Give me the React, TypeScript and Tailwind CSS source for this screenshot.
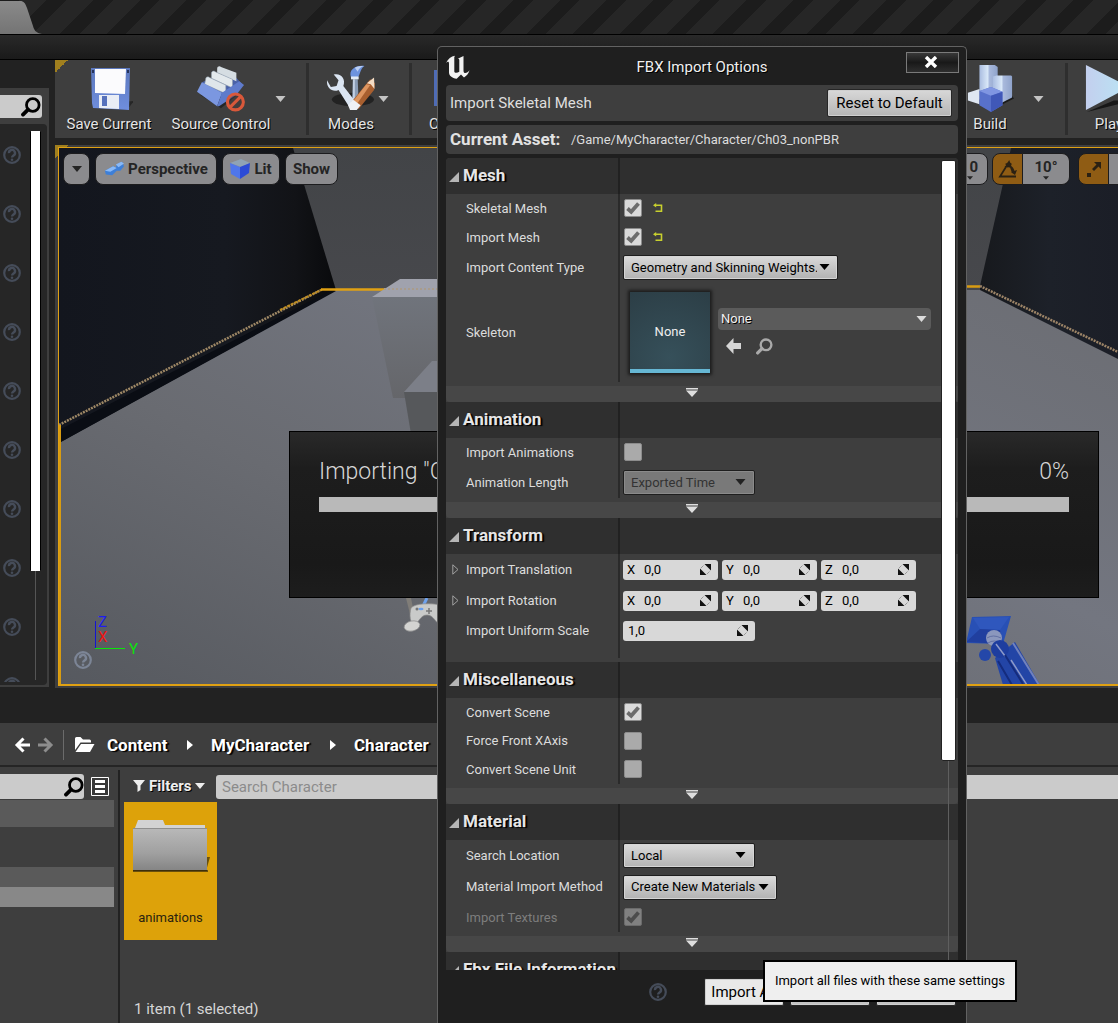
import type { ReactNode } from "react";

const shadow = "[text-shadow:1px_1px_0_#000]";
const heavyShadow = "[text-shadow:2px_1px_1px_#000]";

function HelpIcon({ light = false }: { light?: boolean }) {
  return (
    <svg viewBox="0 0 20 20" className={light ? "size-5 text-[#7c8596]" : "size-5 text-[#454c59]"} aria-hidden="true">
      <circle cx="10" cy="10" r="7.8" fill="none" stroke="currentColor" strokeWidth="2.2" />
      <path d="M7 8.200a3 3 0 1 1 4.600 2.200c-1 .7-1.500 1-1.500 2" fill="none" stroke="currentColor" strokeWidth="2.400" />
      <circle cx="10" cy="14.8" r="1.3" fill="currentColor" />
    </svg>
  );
}

function Triangle({ className }: { className: string }) {
  return (
    <svg viewBox="0 0 10 6" className={className} aria-hidden="true">
      <path d="M0 0h10L5 6z" fill="currentColor" />
    </svg>
  );
}

function SearchIcon({ className }: { className: string }) {
  return (
    <svg viewBox="0 0 20 20" className={className} fill="none" stroke="currentColor" aria-hidden="true">
      <circle cx="11.8" cy="8" r="6.3" strokeWidth="2.8" />
      <path d="M7 12.6 2 17.6" strokeWidth="3.8" strokeLinecap="round" />
    </svg>
  );
}

function SaveIcon() {
  return (
    <svg viewBox="0 0 48 48" className="size-12" aria-hidden="true">
      <defs>
        <linearGradient id="save" x1="0" y1="0" x2="0" y2="1">
          <stop offset="0" stopColor="#5c78bd" />
          <stop offset="1" stopColor="#6f8ede" />
        </linearGradient>
      </defs>
      <path d="M10 44 42 46 49 37 40 38z" fill="#1d1d1d" opacity=".7" />
      <path d="M6 4h39l-1 42-36-2-1-5z" fill="url(#save)" />
      <path d="M10 5h31l-1 25-30-1z" fill="#fbfbfd" />
      <path d="M14 31h20v14l-20-1z" fill="#e9edf5" />
      <path d="M17 32h5v10h-5z" fill="#5671bb" />
      <path d="M7 6h2v3H7zM42 6h2v3h-2z" fill="#27345c" />
    </svg>
  );
}

function SourceControlIcon() {
  return (
    <svg viewBox="0 0 52 50" className="h-12 w-[50px]" aria-hidden="true">
      <path d="M4 32 26 46 46 30 26 34z" fill="#1b1b1b" opacity=".7" />
      <path d="M6 19 36 8 49 22 24 35z" fill="#4a62a8" />
      <path d="M22 5c0-3 3-3 4-2l16 6v9L22 9z" fill="#d5dde2" />
      <path d="M16 10c0-3 3-3 4-2l18 8v9L16 15z" fill="#e3e9ec" stroke="#8d9bab" strokeWidth=".6" />
      <path d="M10 16c0-3 3-3 4-2l17 8v9L9 21z" fill="#dfe6ea" stroke="#8d9bab" strokeWidth=".6" />
      <path d="M6 19 27 30 22 44 1 29z" fill="#7b97e0" />
      <path d="M27 30 45 18 50 22 42 32 24 44 22 44z" fill="#5f7bcb" />
      <circle cx="41" cy="39.500" r="8.300" fill="#4a3a3a" fillOpacity=".5" stroke="#d9583a" strokeWidth="3.200" />
      <path d="m35 45.500 12-12" stroke="#d9583a" strokeWidth="3.200" />
    </svg>
  );
}

function ModesIcon() {
  return (
    <svg viewBox="0 0 52 50" className="h-12 w-[52px]" aria-hidden="true">
      <ellipse cx="28" cy="37" rx="22" ry="7" fill="#191919" opacity=".75" />
      <path d="M28 16h5l1 26h-7z" fill="#8a9cb5" />
      <path d="M28 16h2v24h-2z" fill="#c3d0e3" />
      <path d="M26 14c-3-8 5-13 14-12-5 3-4 10-8 13z" fill="#6d93de" />
      <path d="M30 4c3-2 6-2 9-2-3 1-5 3-6 6z" fill="#bcd0f3" />
      <path d="M26 13h8v3h-8z" fill="#e2eaf4" />
      <path d="M1 17c-1 9 7 13 12 10l12 19 7-5L18 23c3-8-3-14-10-12l5 6-2 6-6 1z" fill="#dbe5f2" />
      <path d="M46 16 51 20 50 27 34 47 26 40z" fill="#a85f2f" />
      <path d="m50 14 .5 12-4-5-4-1z" fill="#f3dcc4" />
      <path d="m42 21 4 1-14 20-4-3z" fill="#dd9560" />
      <path d="m28 37 8 6-4 5-7 0-2-5z" fill="#eef1f7" />
    </svg>
  );
}

function BuildIcon() {
  return (
    <svg viewBox="0 0 50 50" className="size-12" aria-hidden="true">
      <defs>
        <linearGradient id="tower" x1="0" x2="1">
          <stop offset="0" stopColor="#a9bce0" />
          <stop offset=".45" stopColor="#d8e7f8" />
          <stop offset=".55" stopColor="#a8b9dc" />
          <stop offset="1" stopColor="#8fa3cb" />
        </linearGradient>
      </defs>
      <path d="M30 46 50 36 48 33z" fill="#1b1b1b" />
      <path d="M14 1h16l3 2v34H14z" fill="url(#tower)" />
      <path d="M28 13l4-1h15l1 1v22L32 43l-4-5z" fill="url(#tower)" />
      <path d="M2 30l12-4v16L2 38z" fill="#dfe7f2" />
      <path d="M14 28 26 24 38 29v14L26 50 14 43z" fill="#5871cb" />
      <path d="M14 28 26 24 38 29 26 33z" fill="#8096e2" />
      <path d="M26 33 38 29v14l-12 7z" fill="#4058b8" />
    </svg>
  );
}

function PlayIcon() {
  return (
    <svg viewBox="0 0 50 50" className="size-12" aria-hidden="true">
      <defs>
        <linearGradient id="play" x1="0" y1="0" x2="1" y2="0">
          <stop offset="0" stopColor="#c3cfee" />
          <stop offset="1" stopColor="#b9e5f4" />
        </linearGradient>
      </defs>
      <path d="M2 50 50 38 30 38z" fill="#171717" />
      <path d="M1 1 46 24 1 48z" fill="url(#play)" />
    </svg>
  );
}

function ToolButton({ icon, label, className = "" }: { icon: ReactNode; label: string; className?: string }) {
  return (
    <button className={`flex shrink-0 flex-col items-center gap-[2px] pt-1 ${className}`}>
      {icon}
      <span className={`text-[15px] leading-5 whitespace-nowrap text-[#e4e4e4] ${shadow}`}>{label}</span>
    </button>
  );
}

function Separator() {
  return <div className="my-[3px] w-[3px] shrink-0 bg-[#2e2e2e]" />;
}

function Toolbar() {
  return (
    <div className="relative flex h-[78px] overflow-hidden bg-[#3e3e3e]">
      <Corner />
      <ToolButton icon={<SaveIcon />} label="Save Current" className="ml-2 w-[92px]" />
      <ToolButton icon={<SourceControlIcon />} label="Source Control" className="ml-3 w-[108px]" />
      <button aria-label="Source control options" className="w-6 shrink-0">
        <Triangle className="h-[6px] w-[11px] text-[#c4c4c4]" />
      </button>
      <div className="w-[7px] shrink-0" />
      <Separator />
      <ToolButton icon={<ModesIcon />} label="Modes" className="ml-[15px] w-[54px]" />
      <button aria-label="Modes options" className="w-4 shrink-0">
        <Triangle className="h-[6px] w-[11px] text-[#c4c4c4]" />
      </button>
      <div className="w-[15px] shrink-0" />
      <Separator />
      <div className="flex h-full flex-1 flex-col pl-[17px]">
        <div className="mt-[10px] ml-[5px] h-9 w-10 bg-[#4f6cb5]" />
        <span className={`mt-2 text-[15px] leading-5 text-[#e4e4e4] ${shadow}`}>Content</span>
      </div>
      <ToolButton icon={<BuildIcon />} label="Build" className="w-[54px]" />
      <button aria-label="Build options" className="ml-[14px] w-[34px] shrink-0">
        <Triangle className="ml-[2px] h-[6px] w-[11px] text-[#c4c4c4]" />
      </button>
      <Separator />
      <div className="flex w-[50px] shrink-0 overflow-hidden">
        <ToolButton icon={<PlayIcon />} label="Play" className="ml-[11px] w-[60px]" />
      </div>
    </div>
  );
}

function Corner() {
  return <div className="absolute top-0 left-0 size-[13px] bg-[linear-gradient(135deg,#a07f1e_50%,transparent_50%)]" />;
}

function DetailsStrip() {
  return (
    <div className="mt-7 flex min-h-0 flex-col bg-[#3e3e3e] pt-[7px] pr-[2px]">
      <label className="mr-[5px] flex h-[23px] items-center rounded-r-[3px] bg-[#cbcbcb]">
        <input aria-label="Search Classes" className="h-full w-0 flex-1 bg-transparent outline-none" />
        <SearchIcon className="mr-px size-5 text-black" />
      </label>
      <div className="mt-[6px] mb-[2px] flex h-[561px] rounded-r-[4px] bg-[#262626] pt-[7px]">
        <div className="flex h-[551px] w-[30px] flex-col gap-[39px] overflow-hidden pt-[14px] pl-[2px]">
          {Array.from({ length: 10 }, (_, i) => (
            <button key={i} aria-label="Help" className="size-5 shrink-0">
              <HelpIcon />
            </button>
          ))}
        </div>
        <div className="flex h-[549px] w-[11px] flex-col items-center">
          <div className="h-[440px] w-full rounded-[1px] border-x border-black bg-white" />
          <div className="w-px flex-1 bg-[#555]" />
        </div>
      </div>
    </div>
  );
}

function Scene() {
  return (
    <svg viewBox="59 148 1059 536" preserveAspectRatio="xMinYMin slice" className="absolute inset-0 size-full" aria-hidden="true">
      <defs>
        <linearGradient id="floor" x1="0" y1="1" x2="1" y2="0">
          <stop offset="0" stopColor="#56595f" />
          <stop offset=".3" stopColor="#696b71" />
          <stop offset=".55" stopColor="#737680" />
          <stop offset="1" stopColor="#68696d" />
        </linearGradient>
        <linearGradient id="back" x1="0" y1="0" x2="0" y2="1">
          <stop offset="0" stopColor="#424447" />
          <stop offset="1" stopColor="#47484c" />
        </linearGradient>
        <linearGradient id="wallL" x1="0" x2="1">
          <stop offset="0" stopColor="#13161e" />
          <stop offset=".6" stopColor="#161920" />
          <stop offset=".85" stopColor="#121317" />
          <stop offset="1" stopColor="#090a0c" />
        </linearGradient>
        <linearGradient id="wallR" x1="0" x2="1">
          <stop offset="0" stopColor="#17191d" />
          <stop offset=".5" stopColor="#1d2129" />
          <stop offset="1" stopColor="#1b1e27" />
        </linearGradient>
        <linearGradient id="boxFront" x1="0" y1="0" x2="0" y2="1">
          <stop offset="0" stopColor="#70747c" />
          <stop offset="1" stopColor="#65666a" />
        </linearGradient>
      </defs>
      <path d="M59 148h1059v536H59z" fill="url(#floor)" />
      <path d="M290 148h730v142H290z" fill="url(#back)" />
      <path d="M59 148h234l43 142L59 443z" fill="url(#wallL)" />
      <path d="M59 430 330 291l6 0L59 443z" fill="#0a0d14" />
      <path d="M1011 148h107v211L980 290V286z" fill="url(#wallR)" />
      <path d="M59 425 321 290" stroke="#9d8765" strokeWidth="2.500" strokeDasharray="2 1" />
      <path d="M280 310 322 289.500" stroke="#c08d1e" strokeWidth="2" strokeDasharray="3 1" />
      <path d="M321 289.500H384" stroke="#e0a113" strokeWidth="2.500" />
      <path d="M967 286.500H980" stroke="#d99c12" strokeWidth="2.500" />
      <path d="m980 286 138 66" stroke="#9c8467" strokeWidth="2.500" strokeDasharray="2 1" />
      <path d="M400 279h120v18H372z" fill="#a0a2ad" />
      <path d="M384 289h60" stroke="#a99c8c" strokeWidth="2" strokeDasharray="2 2" />
      <path d="M372 297h148v101H393z" fill="url(#boxFront)" />
      <path d="M432 361h90v31H404z" fill="#7c7f88" />
      <path d="M404 392h120v60H414z" fill="#56585b" />
      <path d="M60 425v260" stroke="#d89c10" strokeWidth="2" />
      <g>
        <path d="M406 598h5l4 20-3 4z" fill="#807d78" />
        <path d="m427 598-4 8" stroke="#6fa3ef" strokeWidth="3" />
        <path d="M411 608c4-5 20-5 30-3v20c-6-2-7-10-14-10s-8 8-13 10c-4-2-5-10-3-17z" fill="#c9cac9" stroke="#888" strokeWidth=".7" />
        <ellipse cx="421" cy="609" rx="2.500" ry="1.200" fill="#6aa0f0" />
        <circle cx="417" cy="609" r="1.500" fill="#777" />
        <path d="M429 608v6M426 611h6" stroke="#777" strokeWidth="1.500" />
        <ellipse cx="412" cy="626" rx="8" ry="5" fill="#d3d3d1" stroke="#8b8b8b" strokeWidth=".7" transform="rotate(-12 412 626)" />
      </g>
      <g>
        <path d="m995 658 20-16 25 43h-37z" fill="#2345a6" />
        <path d="m972 617 39-1-8 28-37-1z" fill="#2850b5" />
        <path d="m973 618 7 11 20 1 9-13z" fill="#2f57bd" />
        <path d="m966 642 14-13 20 1 3 14z" fill="#203f9f" />
        <circle cx="994" cy="638" r="8" fill="#8b97bd" />
        <path d="M987 638q6-4 14 0M988 643q6-4 13 0" stroke="#6270a3" fill="none" />
        <circle cx="1000" cy="649" r="9" fill="#1e3d9f" />
        <circle cx="985" cy="655" r="6" fill="#2447a9" />
        <path d="m1013 643 26 42" stroke="#7182bd" strokeWidth="2" />
        <path d="m1011 660 16 25M996 644l9 12" stroke="#8c99c9" strokeWidth="1.500" />
        <path d="m998 661 14 24M1005 655l18 29" stroke="#152c7d" strokeWidth="2" />
      </g>
    </svg>
  );
}

const chip = "flex h-8 shrink-0 items-center justify-center border border-[#1c1c1e] bg-[#8b8b8e] text-[15px] font-bold text-[#242424]";

function Viewport() {
  return (
    <div className="relative mt-[7px] flex flex-1 flex-col bg-[#3e3e3e] pt-[2px] pb-[2px] pl-[3px]">
      <Corner />
      <div className="relative flex flex-1 flex-col overflow-hidden border-t border-b-2 border-l border-[#e0a113]">
        <Scene />
        <div className="relative flex pt-[5px] pl-1">
          <button aria-label="Viewport options" className={`${chip} w-[27px] rounded-[8px]`}>
            <Triangle className="h-[6px] w-[10px]" />
          </button>
          <button className={`${chip} ml-[5px] w-[122px] gap-1 rounded-[8px]`}>
            <svg viewBox="0 0 22 18" className="h-[18px] w-[20px]" aria-hidden="true">
              <path d="m1 11 9-5 3 1 1-3 6-3 2 5-4 5-4 0-5 5-7-1z" fill="#3d7fd8" />
              <path d="m1 11 9-5 4 2-7 4zM13 4l6-3 3 2-6 4z" fill="#8ab9f6" />
            </svg>
            Perspective
          </button>
          <button className={`${chip} ml-[5px] w-[58px] gap-1 rounded-[8px]`}>
            <svg viewBox="0 0 20 20" className="size-5" aria-hidden="true">
              <path d="M0 4 11 0l9 4-9 4z" fill="#8fa3b5" />
              <path d="m0 4 10 4v12L1 15z" fill="#4f76ea" />
              <path d="m20 4-10 4v12l9-6z" fill="#2c4bd6" />
            </svg>
            Lit
          </button>
          <button className={`${chip} ml-[5px] w-[53px] rounded-[8px]`}>Show</button>
          <div className="flex-1" />
          <button aria-label="Grid snap value" className={`${chip} w-10 flex-col rounded-[8px]`}>
            <span className="w-full pr-[9px] text-right leading-[18px]">0</span>
            <Triangle className="mr-[14px] h-1 w-[6px] self-end" />
          </button>
          <button aria-label="Rotation snap" className={`${chip} ml-1 w-[31px] rounded-l-[8px] bg-[#8f5c14]`}>
            <svg viewBox="0 0 20 20" className="size-5" fill="none" stroke="#2b2113" strokeWidth="1.800" aria-hidden="true">
              <path d="M18 17.500H2L11 3l4 11M7 8c5-2 8 0 9 6" />
              <path d="m13 13 6-2-2 5zM7 5l4-2 3 2-3 3z" fill="#2b2113" stroke="none" />
            </svg>
          </button>
          <button className={`${chip} w-[47px] flex-col rounded-r-[8px] border-l-0`}>
            <span className="leading-[18px]">10°</span>
            <Triangle className="h-1 w-[6px]" />
          </button>
          <button aria-label="Scale snap" className={`${chip} ml-2 w-[31px] rounded-l-[8px] bg-[#8f5c14]`}>
            <svg viewBox="0 0 16 16" className="size-4" fill="#2b2113" aria-hidden="true">
              <path d="M1 12h4v4H1zM8 1h7v7l-2.500-2.500-4.500 4.500-2-2 4.500-4.500z" />
            </svg>
          </button>
          <div className={`${chip} w-[9px] border-x-0`} />
        </div>
        <svg viewBox="0 0 60 50" className="absolute bottom-[24px] left-[33px] h-[50px] w-[60px]" aria-hidden="true">
          <path d="M3.500 11v27" stroke="#1414d2" />
          <path d="M3 38.500h30" stroke="#0ae50a" />
          <g fontFamily="Roboto, sans-serif" fontSize="15">
            <text x="6" y="17" fill="#1d1df0">Z</text>
            <text x="6" y="32" fill="#f01414">X</text>
            <text x="37" y="44" fill="#0ae50a">Y</text>
          </g>
        </svg>
        <button aria-label="Viewport help" className="absolute bottom-[14px] left-[14px] size-5">
          <HelpIcon light />
        </button>
      </div>
    </div>
  );
}

function CrumbArrow() {
  return (
    <svg viewBox="0 0 6 10" className="mx-[18px] h-[10px] w-[6px]" fill="#fff" aria-hidden="true">
      <path d="m0 0 6 5-6 5z" />
    </svg>
  );
}

function ContentBrowser() {
  const crumb = `min-w-[62px] text-[17px] leading-6 font-bold text-white ${heavyShadow}`;
  return (
    <div className="mt-[35px] flex flex-1 flex-col bg-[#3e3e3e]">
      <nav className="flex h-[42px] items-center pt-px pl-[14px]">
        <button aria-label="Back" className="size-[18px]">
          <svg viewBox="0 0 18 18" fill="none" stroke="#fff" strokeWidth="3" aria-hidden="true">
            <path d="M16 9H3M9.500 2.500 3 9l6.500 6.500" />
          </svg>
        </button>
        <button aria-label="Forward" className="ml-[5px] size-[18px]">
          <svg viewBox="0 0 18 18" fill="none" stroke="#8d8d8d" strokeWidth="3" aria-hidden="true">
            <path d="M1 9h13M7.500 2.500 14 9l-6.500 6.500" />
          </svg>
        </button>
        <div className="ml-2 h-[30px] w-px bg-[#6b6b6b]" />
        <svg viewBox="0 0 22 16" className="ml-[10px] h-4 w-[22px]" fill="#fff" aria-hidden="true">
          <path d="M1 13V1.500Q1 0 2.500 0H6.500L9 2.500h6.500Q17 2.500 17 4v1.500H6.500L1.800 12z" />
          <path d="M7 7h13.500L16 15H1.500z" />
        </svg>
        <a href="#content" className={`ml-[11px] ${crumb}`}>Content</a>
        <CrumbArrow />
        <a href="#mycharacter" className={`w-[101px] ${crumb}`}>MyCharacter</a>
        <CrumbArrow />
        <a href="#character" className={crumb}>Character</a>
      </nav>
      <div className="h-[2px] bg-[#252525]" />
      <div className="flex flex-1">
        <div className="w-[118px] pt-[7px]">
          <div className="flex items-center gap-[7px]">
            <label className="flex h-[25px] w-[84px] items-center rounded-r-[3px] bg-[#cbcbcb]">
              <input aria-label="Search Folders" className="h-full w-0 flex-1 bg-transparent outline-none" />
              <SearchIcon className="size-5 text-black" />
            </label>
            <button aria-label="Toggle sources view">
              <svg viewBox="0 0 18 19" className="h-[19px] w-[18px]" aria-hidden="true">
                <path d="M.5.500h17v18H.5z" fill="#3a3a3a" stroke="#fff" />
                <path d="M4 3h10v3H4zM4 8h10v3H4zM4 13h10v3H4z" fill="#fff" />
              </svg>
            </button>
          </div>
          <div className="mt-px mr-1 h-[27px] bg-[#5a5a5a]" />
          <div className="mt-10 mr-1 h-5 bg-[#5a5a5a]" />
          <div className="mr-1 h-5 bg-[#888]" />
        </div>
        <div className="mt-[3px] w-[2px] bg-[#222]" />
        <div className="flex flex-1 flex-col pt-2 pl-1">
          <div className="flex h-6 items-center">
            <button className={`mb-[2px] flex w-[92px] items-center pl-[9px] text-[15px] font-bold text-[#eee] ${shadow}`}>
              <svg viewBox="0 0 12 12" className="mr-1 size-3" fill="currentColor" aria-hidden="true">
                <path d="M0 0h12L7.500 5.500V10L4.500 12V5.500z" />
              </svg>
              Filters
              <Triangle className="ml-[3px] h-[6px] w-[10px]" />
            </button>
            <input
              aria-label="Search Character"
              placeholder="Search Character"
              className="h-6 flex-1 rounded-l-[3px] bg-[#cbcbcb] px-[6px] text-[15px] outline-none placeholder:text-[#8b8b8b]"
            />
          </div>
          <button className="mt-[3px] flex h-[138px] w-[93px] flex-col items-center bg-[#dda20a] pt-[17px]">
            <svg viewBox="0 0 78 54" className="h-[54px] w-[78px]" aria-hidden="true">
              <defs>
                <linearGradient id="folder" x1="0" y1="0" x2="0" y2="1">
                  <stop offset="0" stopColor="#b9b9b9" />
                  <stop offset=".6" stopColor="#a0a0a0" />
                  <stop offset="1" stopColor="#858585" />
                </linearGradient>
              </defs>
              <path d="m74 52 4-14h-4zM1 51h75v2H1z" fill="#6a500c" />
              <path d="m3 9 3-8h25l2 5h40v4H3z" fill="#d3d3d3" />
              <path d="M1 9h74v42H1z" fill="url(#folder)" />
              <path d="M1 9.500h74" stroke="#8f8f8f" />
              <path d="M1 51.500h74" stroke="#3e2f0b" />
            </svg>
            <span className="mt-[35px] text-[13px] leading-5 text-[#2a230f]">animations</span>
          </button>
          <div className="flex-1" />
          <p className="mb-1 pl-[10px] text-[15px] leading-5 text-[#d5d5d5]">1 item (1 selected)</p>
        </div>
      </div>
    </div>
  );
}

function ImportProgress() {
  return (
    <div className="absolute top-[431px] left-[289px] h-[167px] w-[810px] border border-black bg-[linear-gradient(#292929,#1d1d1d_22%,#191919_80%,#1d1d1d)] px-[29px] pt-6">
      <div className="flex justify-between text-[23px] leading-8 font-light text-[#d6d6d6]">
        <span>Importing "C</span>
        <span>0%</span>
      </div>
      <div role="progressbar" aria-label="Import progress" aria-valuenow={0} className="mt-[9px] h-[15px] bg-[#b9b9b9]" />
    </div>
  );
}

function Section({ title, expander = true, children }: { title: string; expander?: boolean; children?: ReactNode }) {
  return (
    <section className="shrink-0">
      <button className="flex h-9 w-full bg-[#2f2f2f] text-left">
        <span className="flex h-full w-[174px] shrink-0 items-center border-r-2 border-[#212121] pb-[2px] pl-[3px]">
          <svg viewBox="0 0 10 10" className="mt-1 mr-1 size-[10px] shrink-0" fill="#b5b5b5" aria-hidden="true">
            <path d="M10 0v10H0z" />
          </svg>
          <span className={`text-[17px] leading-6 font-bold whitespace-nowrap text-[#e6e6e6] ${heavyShadow}`}>{title}</span>
        </span>
      </button>
      <div className="pb-1">{children}</div>
      {expander && (
        <button aria-label={`Show advanced ${title} options`} className="flex h-4 w-full justify-center rounded-b-[4px] bg-[#474747] pt-[2px] pr-5">
          <svg viewBox="0 0 12 9" className="h-[9px] w-3" fill="#dedede" aria-hidden="true">
            <path d="M0 0h12v1.500H0zM0 2.500h12L6 9z" />
          </svg>
        </button>
      )}
    </section>
  );
}

function Row({ label, height, arrow = false, dim = false, children }: { label: string; height: string; arrow?: boolean; dim?: boolean; children?: ReactNode }) {
  return (
    <div className={`flex ${height}`}>
      <div className={`flex w-[174px] shrink-0 items-center border-r-2 border-[#2a2a2a] text-[13px] leading-4 ${dim ? "text-[#7d7d7d]" : "text-[#dcdcdc]"}`}>
        <span className="flex w-5 pl-[6px]">
          {arrow && (
            <svg viewBox="0 0 7 11" className="h-[11px] w-[7px]" fill="none" stroke="#a0a0a0" aria-hidden="true">
              <path d="M.8.800v9.400L6 5.500z" />
            </svg>
          )}
        </span>
        {label}
      </div>
      <div className="flex flex-1 items-center pl-[3px]">{children}</div>
    </div>
  );
}

function Check({ label, checked = false, disabled = false }: { label: string; checked?: boolean; disabled?: boolean }) {
  return (
    <span className="relative mb-px ml-px flex size-[18px]">
      <input
        type="checkbox"
        aria-label={label}
        defaultChecked={checked}
        disabled={disabled}
        className="peer size-[18px] appearance-none rounded-[2px] border border-[#8c8c8c] bg-[#aaaaaa] checked:bg-[#dadada] disabled:border-[#6b6b6b] disabled:bg-[#808080]"
      />
      <svg viewBox="0 0 18 18" className="pointer-events-none absolute inset-0 hidden size-[18px] text-[#6c6c6c] peer-checked:block peer-disabled:text-[#4c4c4c]" fill="none" stroke="currentColor" strokeWidth="3.800" aria-hidden="true">
        <path d="m3.500 9.500 3.700 3.300L14.500 4.500" />
      </svg>
    </span>
  );
}

function ResetArrow({ label }: { label: string }) {
  return (
    <button aria-label={`Reset ${label}`} className="mb-[2px] ml-[11px]">
      <svg viewBox="0 0 10 10" className="size-[10px]" fill="none" stroke="#c8d02e" strokeWidth="1.600" aria-hidden="true">
        <path d="M2 2.300h6.500v6H2.500" />
        <path d="M0 2.300 3.200 0v4.600z" fill="#c8d02e" stroke="none" />
      </svg>
    </button>
  );
}

function Dropdown({ label, value, width, disabled = false }: { label: string; value: string; width: string; disabled?: boolean }) {
  return (
    <span className={`relative flex ${width}`}>
      <select
        aria-label={label}
        disabled={disabled}
        className="h-[25px] w-full appearance-none rounded-[2px] border border-[#1e1e1e] bg-[linear-gradient(#dadada,#c6c6c6_50%,#b2b2b2)] pr-5 pl-[7px] text-[13px] text-black shadow-[inset_0_0_0_1px_#d5d5d5] disabled:bg-none disabled:bg-[#797979] disabled:text-[#333] disabled:opacity-100 disabled:shadow-[inset_0_0_0_1px_#8a8a8a]"
      >
        <option>{value}</option>
      </select>
      <Triangle className={`pointer-events-none absolute top-[9px] h-[6px] w-[11px] ${disabled ? "text-[#222]" : "text-black"} ${width === "w-[132px]" ? "right-[9px]" : "right-2"}`} />
    </span>
  );
}

function NumberBox({ axis, label, value, width }: { axis?: string; label: string; value: string; width: string }) {
  return (
    <label className={`flex h-5 items-center rounded-[3px] bg-[#d8d8d8] text-[13px] text-black ${width}`}>
      {axis && <span className="w-[16px] pl-1">{axis}</span>}
      <input aria-label={label} defaultValue={value} className="h-full w-0 flex-1 bg-transparent pl-[5px] outline-none" />
      <svg viewBox="0 0 11 11" className="mr-[7px] size-[11px]" aria-hidden="true">
        <path d="M4.500 0H11v6.500zM0 4.500V11h6.500z" fill="#111" />
        <path d="M3.500 1.500 1 4M9.500 7.500 7 10" stroke="#999" />
      </svg>
    </label>
  );
}

function VectorInput({ label }: { label: string }) {
  return (
    <div className="flex gap-1">
      {["X", "Y", "Z"].map((axis) => (
        <NumberBox key={axis} axis={axis} label={`${label} ${axis}`} value="0,0" width="w-[95px]" />
      ))}
    </div>
  );
}

function SkeletonPicker() {
  return (
    <div className="flex items-center">
      <button className="ml-[7px] flex h-[81px] w-[80px] items-center justify-center border-b-4 border-[#66b7d4] bg-[radial-gradient(circle_at_50%_85%,#36505a,#2c3e46)] pt-[2px] text-[13px] text-[#eee] shadow-[0_0_3px_2px_#1c1c1c]">
        None
      </button>
      <div className="mb-[3px] ml-2 flex flex-col">
        <span className="relative flex w-[213px]">
          <select aria-label="Skeleton" className={`h-[22px] w-full appearance-none rounded-[4px] bg-[#5b5b5b] pl-[3px] text-[13px] text-[#f0f0f0] ${shadow}`}>
            <option>None</option>
          </select>
          <Triangle className="pointer-events-none absolute top-2 right-1 h-[6px] w-[11px] text-[#dcdcdc]" />
        </span>
        <div className="mt-2 flex gap-[14px] pl-2">
          <button aria-label="Use selected asset">
            <svg viewBox="0 0 16 16" className="size-4" fill="#d6d6d6" aria-hidden="true">
              <path d="M0 8 7.500 0v5H15v6H7.500v5z" />
            </svg>
          </button>
          <button aria-label="Browse to asset">
            <SearchIcon className="size-[17px] text-[#a9a9a9]" />
          </button>
        </div>
      </div>
    </div>
  );
}

const plainButton = "h-7 shrink-0 rounded-[2px] border border-[#262626] text-[15px] text-black shadow-[inset_0_0_0_1px_#cfcfcf]";

function ImportDialog() {
  return (
    <div role="dialog" aria-label="FBX Import Options" className="absolute top-[46px] bottom-0 left-[437px] flex w-[530px] flex-col rounded-t-[5px] border-x border-t border-[#626262] bg-[#1f1f1f] px-2">
      <header className="relative flex h-[38px] items-center justify-center">
        <svg viewBox="0 0 24 24" className="absolute top-2 left-0 size-6" fill="#f2f2f2" aria-hidden="true">
          <path d="M0 8C2 4 5 1.500 9 .8L8.300 2v14.500c0 1.600 3 1.800 5 .2V5.500c0-1.400-.6-1.700-1.600-1.700L17.500 1v14.500c0 2 .8 2.600 1.800 2.600 1.500 0 2.800-1 4.200-2.800-.8 3-2.800 5.600-5.500 7.200L15 19.500l-4.300 4.200C6 23.300 3 20.500 3 17.500V8.800C3 6 1.800 6.300 0 8z" />
        </svg>
        <h1 className={`mt-px text-[15px] leading-5 text-[#f0f0f0] ${shadow}`}>FBX Import Options</h1>
        <button aria-label="Close" className="absolute top-[5px] -right-px flex h-[21px] w-[53px] items-center justify-center border border-[#7a7a7a] bg-[linear-gradient(#383838,#191919_50%,#2e2e2e)] pr-1 pb-px">
          <svg viewBox="0 0 14 12" className="h-3 w-[14px]" stroke="#fff" strokeWidth="3.400" aria-hidden="true">
            <path d="m2 1 10 10M12 1 2 11" />
          </svg>
        </button>
      </header>
      <div className="flex h-9 shrink-0 items-center justify-between rounded-[4px] bg-[#3e3e3e] pr-[6px] pl-1">
        <h2 className="text-[15px] text-[#dedede]">Import Skeletal Mesh</h2>
        <button className={`${plainButton} w-[125px] bg-[linear-gradient(#d8d8d8,#b5b5b5)]`}>Reset to Default</button>
      </div>
      <div className="mt-1 flex h-[29px] shrink-0 items-center rounded-[4px] bg-[#3e3e3e] pl-1">
        <span className="w-[121px] text-[17px] font-bold text-[#e2e2e2]">Current Asset:</span>
        <span className="text-[13px] text-[#dcdcdc]">/Game/MyCharacter/Character/Ch03_nonPBR</span>
      </div>
      <div className="relative mt-1 flex h-[812px] shrink-0 flex-col overflow-hidden rounded-t-[4px] bg-[#3e3e3e]">
        <Section title="Mesh">
          <Row label="Skeletal Mesh" height="h-[29px]">
            <Check label="Skeletal Mesh" checked />
            <ResetArrow label="Skeletal Mesh" />
          </Row>
          <Row label="Import Mesh" height="h-[29px]">
            <Check label="Import Mesh" checked />
            <ResetArrow label="Import Mesh" />
          </Row>
          <Row label="Import Content Type" height="h-[31px]">
            <Dropdown label="Import Content Type" value="Geometry and Skinning Weights." width="w-[215px]" />
          </Row>
          <Row label="Skeleton" height="h-[99px]">
            <SkeletonPicker />
          </Row>
        </Section>
        <Section title="Animation">
          <Row label="Import Animations" height="h-[29px]">
            <Check label="Import Animations" />
          </Row>
          <Row label="Animation Length" height="h-[31px]">
            <Dropdown label="Animation Length" value="Exported Time" width="w-[132px]" disabled />
          </Row>
        </Section>
        <Section title="Transform" expander={false}>
          <Row label="Import Translation" height="h-[31px]" arrow>
            <VectorInput label="Import Translation" />
          </Row>
          <Row label="Import Rotation" height="h-[31px]" arrow>
            <VectorInput label="Import Rotation" />
          </Row>
          <Row label="Import Uniform Scale" height="h-[29px]">
            <NumberBox label="Import Uniform Scale" value="1,0" width="w-[132px]" />
          </Row>
          <Row label="" height="h-[13px]" />
        </Section>
        <Section title="Miscellaneous">
          <Row label="Convert Scene" height="h-[29px]">
            <Check label="Convert Scene" checked />
          </Row>
          <Row label="Force Front XAxis" height="h-[28px]">
            <Check label="Force Front XAxis" />
          </Row>
          <Row label="Convert Scene Unit" height="h-[29px]">
            <Check label="Convert Scene Unit" />
          </Row>
        </Section>
        <Section title="Material">
          <Row label="Search Location" height="h-[31px]">
            <Dropdown label="Search Location" value="Local" width="w-[132px]" />
          </Row>
          <Row label="Material Import Method" height="h-[32px]">
            <Dropdown label="Material Import Method" value="Create New Materials" width="w-[154px]" />
          </Row>
          <Row label="Import Textures" height="h-[29px]" dim>
            <Check label="Import Textures" checked disabled />
          </Row>
        </Section>
        <Section title="Fbx File Information" expander={false} />
        <div className="absolute inset-y-0 right-[2px] flex w-[15px] flex-col items-center pt-[2px]">
          <div className="h-[601px] w-full rounded-[2px] border border-[#222] bg-white" />
          <div className="w-px flex-1 bg-[#5f5f5f]" />
        </div>
      </div>
      <footer className="flex items-start gap-[6px] pt-2 pr-[2px]">
        <button aria-label="Import help" className="mt-1 ml-auto size-5">
          <HelpIcon />
        </button>
        <button className={`${plainButton} ml-[30px] w-20 bg-[#e9e9e9]`}>Import All</button>
        <button aria-label="Import" className={`${plainButton} w-20 bg-[#c4c4c4]`} />
        <button aria-label="Cancel" className={`${plainButton} w-20 bg-[#c4c4c4]`} />
      </footer>
    </div>
  );
}

export default function App() {
  return (
    <div className="relative flex min-h-screen flex-col overflow-hidden bg-[#222] font-[Roboto,sans-serif]">
      <div className="flex h-[34px] shrink-0 items-start bg-[repeating-linear-gradient(-45deg,#1c1c1c_0_14px,#262626_14px_33px)] bg-[repeating-linear-gradient(135deg,#1c1c1c_0_14px,#262626_14px_33px)]">
        <svg viewBox="0 0 42 34" className="h-[34px] w-[42px]" aria-hidden="true">
          <defs>
            <linearGradient id="tab" x1="0" y1="0" x2="0" y2="1">
              <stop offset="0" stopColor="#8a8a8a" />
              <stop offset="1" stopColor="#747474" />
            </linearGradient>
          </defs>
          <path d="M0 1h20c4 0 5 2 7 7l6 18c1 4 3 7 9 8H0z" fill="url(#tab)" />
        </svg>
      </div>
      <div className="h-[26px] shrink-0 border-y border-black bg-[linear-gradient(#292929,#1a1a1a)]" />
      <div className="flex h-[628px] shrink-0">
        <div className="w-[49px] shrink-0">
          <DetailsStrip />
        </div>
        <main className="ml-[6px] flex min-w-0 flex-1 flex-col">
          <Toolbar />
          <Viewport />
        </main>
      </div>
      <ContentBrowser />
      <ImportProgress />
      <ImportDialog />
      <div role="tooltip" className="absolute top-[960px] left-[763px] flex h-[42px] w-[254px] items-center justify-center border-2 border-black bg-[#efefef] text-[13px] text-black">
        Import all files with these same settings
      </div>
    </div>
  );
}
